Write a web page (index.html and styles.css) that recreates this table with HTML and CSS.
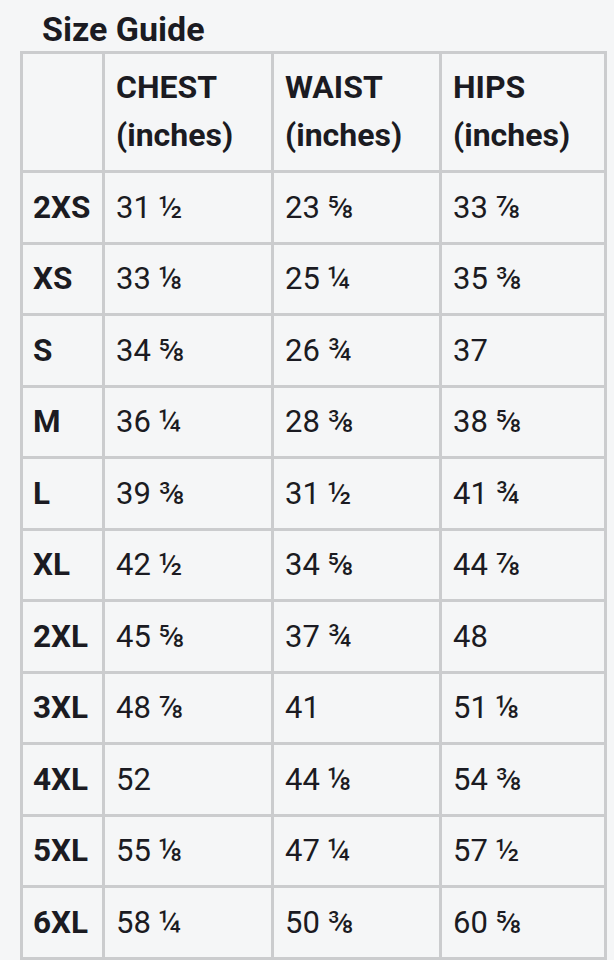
FILE: index.html
```html
<!DOCTYPE html>
<html>
<head>
<meta charset="utf-8">
<link rel="stylesheet" href="styles.css">
</head>
<body>
<h1 class="title">Size Guide</h1>
<table class="guide">
  <colgroup>
    <col class="c-size">
    <col class="c-chest">
    <col class="c-waist">
    <col class="c-hips">
  </colgroup>
  <thead>
    <tr><th></th><th>CHEST<br>(inches)</th><th>WAIST<br>(inches)</th><th>HIPS<br>(inches)</th></tr>
  </thead>
  <tbody>
    <tr><th>2XS</th><td>31 ½</td><td>23 ⅝</td><td>33 ⅞</td></tr>
    <tr><th>XS</th><td>33 ⅛</td><td>25 ¼</td><td>35 ⅜</td></tr>
    <tr><th>S</th><td>34 ⅝</td><td>26 ¾</td><td>37</td></tr>
    <tr><th>M</th><td>36 ¼</td><td>28 ⅜</td><td>38 ⅝</td></tr>
    <tr><th>L</th><td>39 ⅜</td><td>31 ½</td><td>41 ¾</td></tr>
    <tr><th>XL</th><td>42 ½</td><td>34 ⅝</td><td>44 ⅞</td></tr>
    <tr><th>2XL</th><td>45 ⅝</td><td>37 ¾</td><td>48</td></tr>
    <tr><th>3XL</th><td>48 ⅞</td><td>41</td><td>51 ⅛</td></tr>
    <tr><th>4XL</th><td>52</td><td>44 ⅛</td><td>54 ⅜</td></tr>
    <tr><th>5XL</th><td>55 ⅛</td><td>47 ¼</td><td>57 ½</td></tr>
    <tr><th>6XL</th><td>58 ¼</td><td>50 ⅜</td><td>60 ⅝</td></tr>
  </tbody>
</table>
</body>
</html>
```
FILE: styles.css
```css
html, body {
  margin: 0;
  padding: 0;
  background: #f5f6f7;
}
body {
  font-family: Roboto, "Liberation Sans", sans-serif;
  color: #1b1b22;
}
.title {
  margin: 0;
  padding: 9px 0 0 42px;
  font-size: 34px;
  line-height: 40px;
  font-weight: 700;
  height: 42px;
}
.guide {
  margin-left: 20px;
  border-collapse: collapse;
  table-layout: fixed;
  width: 584px;
  border: 3px solid #cbccce;
}
.c-size { width: 82px; }
.c-chest { width: 169px; }
.c-waist { width: 168px; }
.c-hips { width: 165px; }
.guide th, .guide td {
  border: 3px solid #cbccce;
  text-align: left;
  vertical-align: middle;
  font-size: 31px;
  padding: 0 0 0 11px;
}
.guide thead th {
  height: 113px;
  font-weight: 700;
  font-size: 32px;
  line-height: 48px;
  padding-bottom: 3px;
}
.guide thead th:not(:empty) {
  padding-left: 11px;
}
.guide tbody th {
  font-weight: 700;
  font-size: 31.5px;
  padding-left: 10px;
}
.guide tbody tr {
  height: 71.5px;
}
.guide td {
  font-weight: 400;
}
```
